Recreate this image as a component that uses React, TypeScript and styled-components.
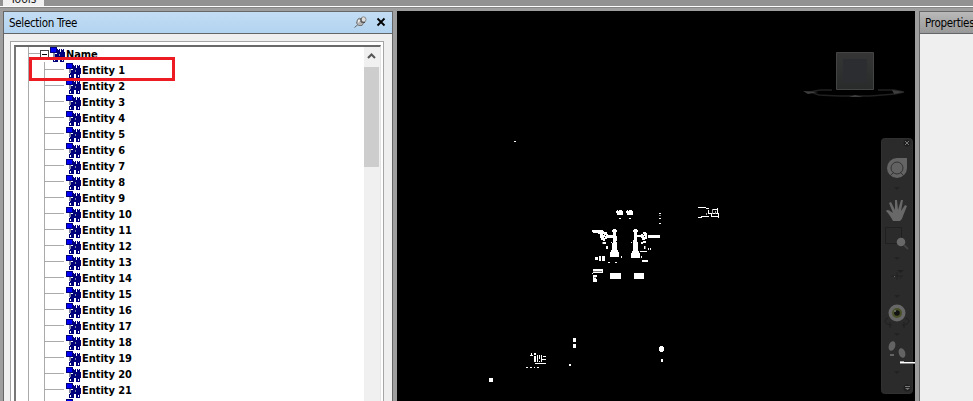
import React from "react";
import styled, { createGlobalStyle } from "styled-components";

const Global = createGlobalStyle`
  * { box-sizing: border-box; }
  body { margin: 0; overflow: hidden; background: #a0a0a0; }
  svg { display: block; flex: none; }
`;
const Window = styled.div`
  width: 973px; height: 401px; overflow: hidden;
  display: flex; flex-direction: column;
  background: #9d9e9d;
  font-family: "DejaVu Sans Condensed", "DejaVu Sans", sans-serif;
  font-size: 11px; color: #000;
`;
const Ribbon = styled.div`
  height: 8px; flex: none; padding-left: 3px;
  background: linear-gradient(#929292 0 6px, #fff 6px 7px, #858585 7px);
`;
const Tab = styled.div`
  width: 41px; height: 6px; overflow: hidden; background: #f0f0f0;
  padding-left: 7px; font-size: 12px; color: #222;
  span { display: block; margin-top: -8px; line-height: 14px; }
`;
const Workspace = styled.div`
  flex: 1; min-height: 0; display: flex; padding-top: 3px;
`;
const Panel = styled.section<{ $width: number; $left: number }>`
  width: ${p => p.$width}px; margin-left: ${p => p.$left}px; flex: none;
  height: 400px; display: flex; flex-direction: column;
  border: 1px solid #666; background: #efefef;
`;
const Header = styled.header<{ $active?: boolean }>`
  height: 22px; flex: none; display: flex; align-items: center;
  padding: 0 6px 0 5px; border-bottom: 1px solid #626669;
  background: ${p => p.$active ? "linear-gradient(#c3ddf4, #b2d3f0)" : "linear-gradient(#b9b9b9, #989898)"};
`;
const Title = styled.span<{ $width: number }>`
  width: ${p => p.$width}px; font-size: 11.5px; white-space: nowrap; letter-spacing: -0.3px;
  margin-right: auto; line-height: 20px;
`;
const HeaderIcons = styled.div` display: flex; gap: 9px; `;
const TreeFrame = styled.div`
  margin: 7px 8px 0 6px; width: 374px; flex: 1; padding: 3px 2px 0 3px;
  border: 1px solid #a5a5a5; border-bottom: 0; background: #fff;
`;
const TreeBox = styled.div`
  height: 100%; display: flex; overflow: hidden;
  border-top: 2px solid #696969; border-left: 2px solid #777; border-right: 1px solid #e3e3e3;
`;
const Tree = styled.div`
  flex: 1; position: relative; overflow: hidden; padding-left: 12px;
`;
const TreeRoot = styled.div` border-left: 1px solid #ababab; margin-top: -1px; `;
const Children = styled.div` border-left: 1px solid #ababab; margin-left: 15px; `;
const Row = styled.div<{ $root?: boolean }>`
  height: 16px; display: flex; align-items: center;
  font-weight: bold; white-space: nowrap;
  &::before {
    content: ""; width: ${p => p.$root ? 11 : 19}px; height: 1px; background: #ababab;
    margin-right: ${p => p.$root ? 0 : 2}px; margin-top: -1px;
  }
`;
const Label = styled.span` line-height: 14px; padding-top: 2px; letter-spacing: -0.05px; `;
const Highlight = styled.div`
  position: absolute; left: 13px; top: 10px; width: 146px; height: 24px;
  border: 3px solid #ed1c24;
`;
const Scroll = styled.div` width: 16px; background: #f0f0f0; `;
const Thumb = styled.div` width: 15px; height: 100px; background: #cdcdcd; `;
const Viewport = styled.main`
  width: 518px; height: 390px; margin-left: 4px; flex: none; background: #000;
`;

const EntityIcon = () => (
  <svg width="16" height="16" shapeRendering="crispEdges">
    <path fill="#00007b" d="M7 3h3v3h1V3h3v3h1v6h-1v5h-4v-5H8v5H3v-5h1V8h3z" />
    <path fill="#0000f4" stroke="#00007b" d="M.5 1.5h6v5h-6z" />
    <path fill="#8589a0" d="M3 7h2v4H3zM9 8h1v2H9z" />
    <path fill="#fff" d="M4 13h1v2H4zM12 13h1v2h-1zM8 3h1v1H8zM12 3h1v1h-1z" />
  </svg>
);

const Expander = () => (
  <svg width="10" height="9" shapeRendering="crispEdges">
    <path fill="#fff" stroke="#444" d="M.5.5h8v8h-8z" /><path stroke="#000" d="M2 4.5h5" />
  </svg>
);

const Model = () => (
  <g fill="#fff" shapeRendering="crispEdges">
    <path d="M514 141h2v1h-2zM489 378h4v4h-4zM573 338h3v4h-3zM573 344h3v4h-3zM569 364h2v2h-2zM661 359h2v3h-2zM660 346h3v1h1v4h-1v1h-3v-1h-1v-4h1z" />
    <path d="M616 211h1v-1h1v1h1v-1h3v1h1v4h-6v-2h-1zM626 211h1v-1h1v1h1v-1h3v1h1v4h-6v-2h-1zM619 218h2v1h-2zM629 218h2v1h-2z" />
    <path d="M592 230h11v1h1v1h3v2h1v1h5v-3h-1v-2h1v-1h3v1h1v2h-1v4h1v5h-1v1h1v8h1v2h1v5h-9v-5h1v-2h1v-7h1v-5h-6v1h-2v2h-2v-1h-2v-2h-1v-4h-2v-1h-5z" />
    <path d="M633 230h1v-1h3v1h1v2h-1v3h4v-1h2v-2h3v1h1v6h-2v1h-3v-2h-1v-1h-4v5h1v9h1v2h1v5h-9v-5h1v-2h1v-11h1v-8h-1zM648 235h12v3h-12z" />
    <path d="M603 242h3v2h-3zM606 246h2v3h-2zM611 242h1v1h-1zM631 242h1v1h-1zM595 257h3v3h-3zM599 256h2v5h-2zM602 256h3v5h-3zM621 256h1v2h-1zM608 262h2v1h-2zM615 262h2v1h-2zM593 269h10v4h-10zM592 273h1v1h-1zM593 275h4v2h-1v2h1v3h-4zM610 273h11v6h-11zM634 273h10v6h-10zM641 242h2v2h-2zM644 246h1v3h-1zM640 251h7v1h-7zM648 248h1v2h-1zM650 248h1v2h-1zM641 256h1v2h-1zM642 260h6v2h-6zM643 241h3v2h-3zM659 213h2v1h-2zM659 218h2v1h-2zM659 223h2v1h-2z" />
    <path fill="#000" d="M603 234h1v1h-1zM605 235h1v1h-1zM604 237h1v1h-1zM643 234h1v1h-1zM644 236h1v1h-1z" />
    <path fill="#777" d="M659 215h2v1h-2zM602 242h1v2h-1zM645 246h1v3h-1zM593 271h9v1h-9zM594 277h2v1h-2z" />
    <path d="M698 207h8v1h3v1h-3v-1h-8zM708 210h1v4h-1zM709 213h4v1h-4zM713 209h4v1h-4zM717 208h1v5h-1zM713 213h6v5h-1v-4h-5zM701 216h8v1h-8zM698 217h4v1h-4zM711 216h7v1h-7zM711 213h1v4h-1z" />
    <path fill="#aaa" d="M706 213h1v2h-1zM712 209h1v5h-1zM715 211h1v3h-1z" />
    <path d="M531 353h1v2h1v1h-3v-1h1zM534 353h2v2h-2zM534 356h2v6h-2zM537 355h1v7h-1zM539 355h1v4h-1zM541 355h1v7h-1zM543 356h3v1h-3zM542 359h4v1h-4zM539 361h1v1h-1zM535 363h11v1h-11zM526 367h2v1h-2zM530 367h2v1h-2zM534 367h1v1h-1zM537 367h2v1h-2z" />
  </g>
);

const Scene = () => (
  <svg width="518" height="390" viewBox="397 11 518 390">
    <defs><linearGradient id="cube" x2="0" y2="1"><stop stopColor="#353535" /><stop offset="1" stopColor="#292b2b" /></linearGradient></defs>
    <Model />
    <path fill="none" stroke="#202020" strokeWidth="1.4" d="M832 90h-12l-10 2 9 3 20 1h31l25-2 9-2-10-2h-16" />
    <path fill="#3e3e3e" d="M803 91l15 1-10 2zM904 92l-12-2 2 4zM849 97l6-2 8 2z" />
    <path fill="url(#cube)" stroke="#444" d="M836.5 52.5h37v37h-37z" /><path fill="#2b2d30" d="M843 59h24v24h-24z" />
    <rect x="881.5" y="138.5" width="31" height="255" rx="3" fill="#2b2b2b" stroke="#303030" />
    <circle cx="907" cy="143" r="3.5" fill="#1e1e1e" /><path stroke="#777" d="m905 141 4 4m0-4-4 4" />
    <path fill="#646464" d="M897 158h10v10a10 10 0 1 1-10-10" />
    <circle cx="897" cy="168" r="6" fill="#626262" stroke="#333" /><path stroke="#333" d="m890 176 4-4m10 4-4-4" />
    <path fill="#222" d="M894 187h6l-3 3zM894 257h6l-3 3zM894 295h6l-3 3zM894 333h6l-3 3zM894 371h6l-3 3z" />
    <path fill="#686868" d="M893 221c-2-4-4-7-7-10l1-1c3 0 4 2 6 3l-4-10 2-1 4 8v-10h2l1 10 3-10h2l-2 11 4-6 2 1-4 10c-1 3-1 3-3 5z" />
    <path fill="none" stroke="#202020" d="M885.5 227.5h16v16h-16z" /><circle cx="901" cy="242" r="4.3" fill="#686868" /><path stroke="#444" strokeWidth="2" d="m904 245 4 4" />
    <path fill="none" stroke="#232323" d="M891 276h11M897 272v8M900 279l3-4" /><path fill="#202020" d="M897 270h7l-3.5 3z" /><path fill="#666" d="M894 276h1v1h-1z" />
    <path fill="none" stroke="#202020" d="M888 318c-5 2-3 7 4 7m-2-3v6M906 318c5 2 3 7-4 7m2-3v6" />
    <circle cx="897" cy="313" r="8.5" fill="#676767" /><circle cx="897" cy="313" r="5" fill="#485129" /><circle cx="897" cy="313" r="2.8" fill="#111" /><circle cx="895" cy="311" r="1" fill="#777" />
    <g fill="#636363"><ellipse cx="892" cy="346" rx="3.2" ry="5" transform="rotate(18 892 346)" /><ellipse cx="902" cy="353" rx="3.2" ry="5" transform="rotate(-18 902 353)" /><path d="M890 354h4v2h-4z" /></g>
    <path fill="#aaa" d="M900 361h4v1h-4z" /><path fill="#fff" d="M900 362h15v1h-15z" /><path fill="#888" d="M900 363h15v1h-15z" />
    <circle cx="907" cy="388" r="3.5" fill="#1f1f1f" /><path fill="#777" d="M905 386h5v1h-5zM905 388h5l-2.5 2z" />
  </svg>
);

export default function App() {
  return <><Global /><Window>
    <Ribbon><Tab><span>Tools</span></Tab></Ribbon>
    <Workspace>
      <Panel $width={390} $left={3}>
        <Header $active><Title $width={72}>Selection Tree</Title>
          <HeaderIcons>
            <svg width="13" height="13" viewBox="0 0 13 13">
              <path stroke="#666" d="M.5 11.5 4 8.5" /><path fill="#b5b5b5" stroke="#777" d="M3.5 3.5 5.5 2l4 5-1.5 2.5H4.5L2.5 7z" />
              <path fill="#eee" d="M4 4h3L4 7z" /><ellipse cx="9.5" cy="3.5" rx="2.5" ry="2.7" fill="#ddd" stroke="#888" /><path stroke="#444" d="M7 2v4l4 .5" fill="none" />
            </svg>
            <svg width="10" height="13"><path stroke="#000" strokeWidth="1.8" d="m1.5 2.5 7 7m0-7-7 7" /></svg>
          </HeaderIcons>
        </Header>
        <TreeFrame><TreeBox>
          <Tree>
            <TreeRoot>
              <Row $root><Expander /><EntityIcon /><Label>Name</Label></Row>
              <Children>
                {Array.from({ length: 22 }, (_, i) => <Row key={i}><EntityIcon /><Label>Entity {i + 1}</Label></Row>)}
              </Children>
            </TreeRoot>
            <Highlight />
          </Tree>
          <Scroll><svg width="15" height="20"><path fill="none" stroke="#555" strokeWidth="2" d="m4 11 3.5-3.5L11 11" /></svg><Thumb /></Scroll>
        </TreeBox></TreeFrame>
      </Panel>
      <Viewport><Scene /></Viewport>
      <Panel $width={60} $left={4}><Header><Title $width={60}>Properties</Title></Header></Panel>
    </Workspace>
  </Window></>;
}
